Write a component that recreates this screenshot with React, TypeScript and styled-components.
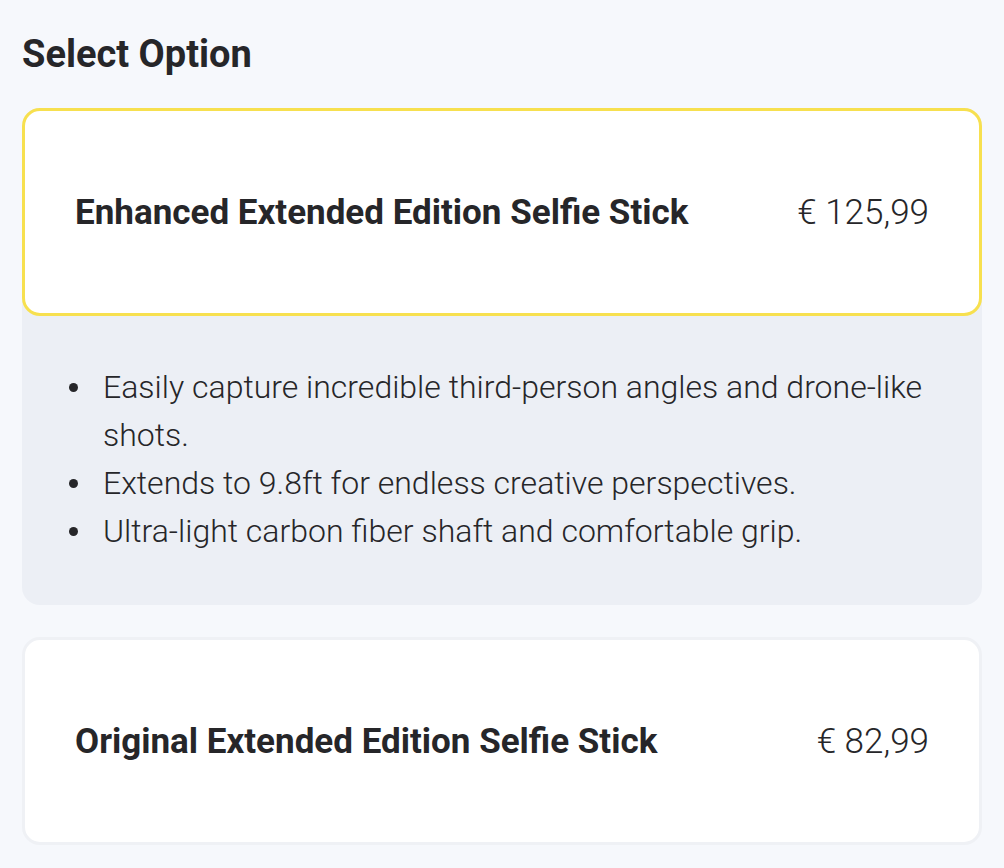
import React from 'react';
import styled, { createGlobalStyle } from 'styled-components';

const GlobalStyle = createGlobalStyle`
  html, body {
    margin: 0;
    padding: 0;
    background: #f6f8fc;
    font-family: Roboto, "Liberation Sans", sans-serif;
    color: #262629;
  }
`;

const Page = styled.div`
  padding: 31px 22px 0;
`;

const Title = styled.h2`
  font-size: 38px;
  font-weight: 700;
  line-height: 46px;
  margin: 0 0 31px;
`;

const List = styled.div`
  display: flex;
  flex-direction: column;
  gap: 32px;
`;

const Option = styled.div<{ $open: boolean }>`
  background: ${p => (p.$open ? '#eceff5' : 'transparent')};
  border-radius: 18px;
`;

const Card = styled.div<{ $selected: boolean }>`
  display: flex;
  align-items: center;
  justify-content: space-between;
  height: 208px;
  box-sizing: border-box;
  padding: 0 50px;
  background: #fff;
  border: 3px solid ${p => (p.$selected ? '#f7e04f' : '#eff1f5')};
  border-radius: 18px;
`;

const Name = styled.span`
  font-size: 35px;
  font-weight: 700;
`;

const Price = styled.span`
  font-size: 35px;
  font-weight: 300;
`;

const Features = styled.ul`
  margin: 0;
  padding: 47px 40px 50px 47px;
  list-style: none;
  font-size: 32px;
  font-weight: 300;
  line-height: 48px;
`;

const Feature = styled.li`
  display: grid;
  grid-template-columns: 34px 1fr;

  &::before {
    content: '';
    width: 9px;
    height: 9px;
    margin-top: 20px;
    border-radius: 50%;
    background: #262629;
  }
`;

const options = [
  {
    name: 'Enhanced Extended Edition Selfie Stick',
    price: '€ 125,99',
    selected: true,
    features: [
      'Easily capture incredible third-person angles and drone-like shots.',
      'Extends to 9.8ft for endless creative perspectives.',
      'Ultra-light carbon fiber shaft and comfortable grip.',
    ],
  },
  {
    name: 'Original Extended Edition Selfie Stick',
    price: '€ 82,99',
    selected: false,
    features: [],
  },
];

export default function App() {
  return (
    <>
      <GlobalStyle />
      <Page>
        <Title>Select Option</Title>
        <List>
          {options.map(o => (
            <Option key={o.name} $open={o.selected}>
              <Card $selected={o.selected}>
                <Name>{o.name}</Name>
                <Price>{o.price}</Price>
              </Card>
              {o.selected && (
                <Features>
                  {o.features.map(f => (
                    <Feature key={f}>
                      <span>{f}</span>
                    </Feature>
                  ))}
                </Features>
              )}
            </Option>
          ))}
        </List>
      </Page>
    </>
  );
}
